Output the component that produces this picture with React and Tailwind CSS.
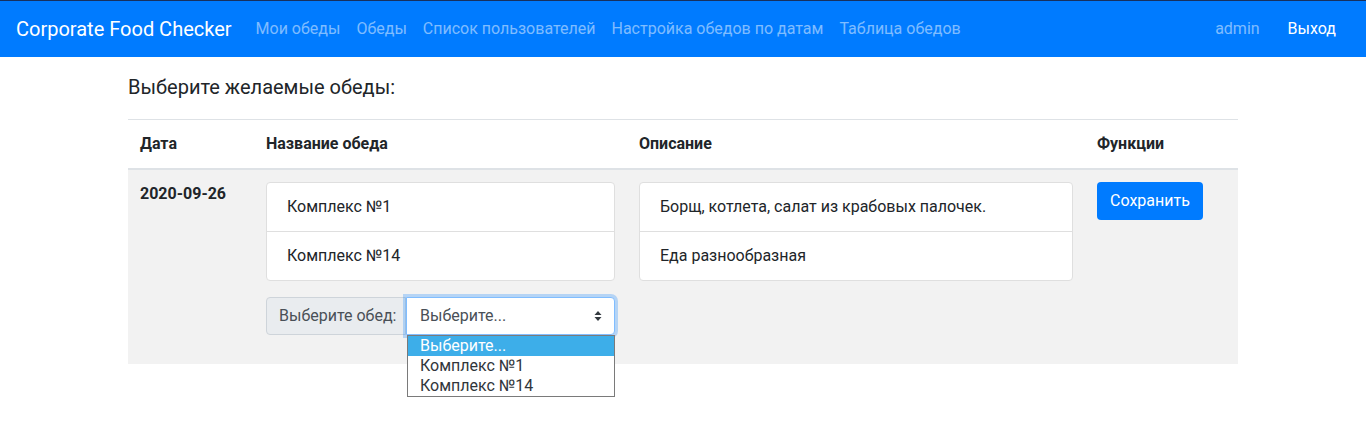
import { useState } from "react";

const navLinks = [
    "Мои обеды",
    "Обеды",
    "Список пользователей",
    "Настройка обедов по датам",
    "Таблица обедов",
];

const meals = [
    { name: "Комплекс №1", desc: "Борщ, котлета, салат из крабовых палочек." },
    { name: "Комплекс №14", desc: "Еда разнообразная" },
];

export default function App() {
    const [selected] = useState("Выберите...");
    const options = ["Выберите...", "Комплекс №1", "Комплекс №14"];

    return (
        <div className="min-h-[430px] bg-white text-[#212529] font-['Roboto',sans-serif]">
            {/* Navbar */}
            <nav className="flex h-[57px] items-center border-t border-[#17305f] bg-[#007bff] pl-4 pr-[22px]">
                <span className="mr-4 text-[20px] leading-[30px] text-white">Corporate Food Checker</span>
                <div className="flex">
                    {navLinks.map((link) => (
                        <a key={link} className="px-2 text-[16px] leading-6 text-white/50">
                            {link}
                        </a>
                    ))}
                </div>
                <div className="ml-auto flex">
                    <a className="px-2 text-[16px] leading-6 text-white/50">admin</a>
                    <a className="ml-3 px-2 text-[16px] leading-6 text-white">Выход</a>
                </div>
            </nav>

            {/* Content */}
            <div className="mx-auto w-[1110px] pt-[18px]">
                <h5 className="mb-5 text-[20px] leading-6">Выберите желаемые обеды:</h5>

                <table className="w-full border-collapse text-[16px] leading-6">
                    <thead>
                        <tr className="border-t border-[#dee2e6]">
                            <th className="w-[126px] border-b-2 border-[#dee2e6] p-3 text-left font-bold">Дата</th>
                            <th className="w-[373px] border-b-2 border-[#dee2e6] p-3 text-left font-bold">Название обеда</th>
                            <th className="w-[458px] border-b-2 border-[#dee2e6] p-3 text-left font-bold">Описание</th>
                            <th className="border-b-2 border-[#dee2e6] p-3 text-left font-bold">Функции</th>
                        </tr>
                    </thead>
                    <tbody>
                        <tr className="bg-[#f2f2f2] align-top">
                            <td className="p-3 font-bold">2020-09-26</td>
                            <td className="px-3 pt-3 pb-[29px]">
                                <ul className="rounded border border-[#dfdfdf] bg-white">
                                    {meals.map((m, i) => (
                                        <li
                                            key={m.name}
                                            className={`px-5 py-3 ${i > 0 ? "border-t border-[#dfdfdf]" : ""}`}
                                        >
                                            {m.name}
                                        </li>
                                    ))}
                                </ul>

                                {/* select group */}
                                <div className="relative mt-4 flex h-[38px] w-[349px]">
                                    <span className="flex w-[140px] shrink-0 items-center rounded-l border border-[#ced4da] bg-[#e9ecef] pl-3 text-[#495057]">
                                        Выберите обед:
                                    </span>
                                    <div className="flex flex-1 items-center justify-between rounded-r border border-[#80bdff] bg-white pl-[13px] pr-3 text-[#495057] shadow-[0_0_0_3px_rgba(0,123,255,0.25)]">
                                        <span>{selected}</span>
                                        <svg width="8" height="12" viewBox="0 0 8 12" className="fill-[#343a40]">
                                            <path d="M4 1 L7.5 5 H0.5 Z" />
                                            <path d="M4 11 L7.5 7 H0.5 Z" />
                                        </svg>
                                    </div>

                                    {/* open dropdown */}
                                    <ul className="absolute top-[38px] left-[141px] z-10 w-[208px] border border-[#7a7a7a] bg-white text-[16px] leading-5 text-[#31363b]">
                                        {options.map((o, i) => (
                                            <li
                                                key={o}
                                                className={`px-3 ${i === 0 ? "bg-[#3daee9] text-white" : ""}`}
                                            >
                                                {o}
                                            </li>
                                        ))}
                                    </ul>
                                </div>
                            </td>
                            <td className="px-3 pt-3">
                                <ul className="rounded border border-[#dfdfdf] bg-white">
                                    {meals.map((m, i) => (
                                        <li
                                            key={m.desc}
                                            className={`px-5 py-3 ${i > 0 ? "border-t border-[#dfdfdf]" : ""}`}
                                        >
                                            {m.desc}
                                        </li>
                                    ))}
                                </ul>
                            </td>
                            <td className="px-3 pt-3">
                                <button className="h-[38px] rounded bg-[#007bff] px-[13px] text-white">Сохранить</button>
                            </td>
                        </tr>
                    </tbody>
                </table>
            </div>
        </div>
    );
}
